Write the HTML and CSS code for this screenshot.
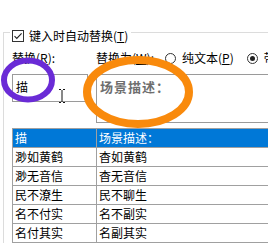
FILE: index.html
```html
<!DOCTYPE html>
<html>
<head>
    <title>自动更正</title>
    <link rel="stylesheet" href="styles.css">
</head>
<body>
    <div class="group">
        <div class="legend">
            <svg class="check" width="12" height="12" viewBox="0 0 12 12">
                <rect x="0.5" y="0.5" width="11" height="11" fill="#fff" stroke="#333"/>
                <path d="M2.5 6.2 L4.8 8.5 L9.6 3.4" fill="none" stroke="#222" stroke-width="1.1"/>
            </svg>
            <span>键入时自动替换(<u>T</u>)</span>
        </div>
        <div class="labels">
            <span class="lab-left">替换(<u>R</u>):</span>
            <span class="lab-right">替换为(<u>W</u>):</span>
            <span class="radio"></span>
            <span class="radio-text">纯文本(<u>P</u>)</span>
            <span class="radio on"></span>
            <span class="radio-text">带格式文本(<u>F</u>)</span>
        </div>
        <div class="inputs">
            <div class="box small">描</div>
            <div class="box big">场景描述：</div>
        </div>
        <table class="list">
            <tr class="head"><td class="c1">描</td><td>场景描述：</td></tr>
            <tr><td class="c1">渺如黄鹤</td><td>杳如黄鹤</td></tr>
            <tr><td class="c1">渺无音信</td><td>杳无音信</td></tr>
            <tr><td class="c1">民不潦生</td><td>民不聊生</td></tr>
            <tr><td class="c1">名不付实</td><td>名不副实</td></tr>
            <tr><td class="c1">名付其实</td><td>名副其实</td></tr>
        </table>
    </div>

    <svg class="marks" width="268" height="244" viewBox="0 0 268 244">
        <ellipse cx="138" cy="92" rx="51" ry="32" fill="none" stroke="#f98a0c" stroke-width="8"/>
        <ellipse cx="28" cy="80" rx="24" ry="19.5" fill="none" stroke="#6a2bd6" stroke-width="6"/>
        <path d="M59 89.5 H61 M63 89.5 H65 M62 90 V102 M59 102.5 H61 M63 102.5 H65" fill="none" stroke="#111" stroke-width="1"/>
    </svg>
</body>
</html>
```

FILE: styles.css
```css
body {
    margin: 0;
    background: #fff;
    font-family: "Noto Sans CJK SC", "Liberation Sans", sans-serif;
    font-size: 12px;
    color: #000;
    width: 268px;
    height: 244px;
    overflow: hidden;
    position: relative;
}

.group {
    margin: 32px 0 0 3px;
    border-top: 1px solid #dcdcdc;
    border-left: 1px solid #dcdcdc;
    padding-left: 8px;
    width: 400px;
}

.legend {
    display: flex;
    align-items: center;
    gap: 5px;
    margin: -4px 0 0 -2px;
    padding: 0 3px 0 2px;
    height: 14px;
    line-height: 14px;
    background: #fff;
    width: fit-content;
}

.check {
    display: block;
}

.labels {
    display: flex;
    align-items: center;
    height: 14px;
    line-height: 14px;
    margin-top: 8px;
    white-space: nowrap;
}

.lab-left {
    width: 84px;
}

.lab-right {
    width: 69px;
}

.radio {
    width: 11px;
    height: 11px;
    border: 1px solid #333;
    border-radius: 50%;
    box-sizing: border-box;
    margin-right: 6px;
    position: relative;
}

.radio.on::after {
    content: "";
    position: absolute;
    left: 2px;
    top: 2px;
    width: 5px;
    height: 5px;
    border-radius: 50%;
    background: #222;
}

.radio-text {
    margin-right: 13px;
}

.inputs {
    display: flex;
    align-items: flex-start;
    gap: 8px;
    margin-top: 9px;
}

.box {
    border: 1px solid #9a9a9a;
    box-sizing: border-box;
    padding: 3px 3px;
    line-height: 18px;
}

.box.small {
    width: 76px;
    height: 28px;
}

.box.big {
    width: 300px;
    height: 49px;
    color: #6e6e6e;
    font-weight: bold;
    font-size: 13px;
    letter-spacing: 1px;
}

.list {
    margin-top: 5px;
    border-collapse: collapse;
    width: 320px;
}

.list td {
    border: 1px solid #a0a0a0;
    height: 18px;
    padding: 0 0 0 2px;
    line-height: 18px;
    white-space: nowrap;
}

.list .c1 {
    width: 81px;
}

.list .head td {
    background: #0078d7;
    color: #fff;
}

.marks {
    position: absolute;
    left: 0;
    top: 0;
    pointer-events: none;
}
```
